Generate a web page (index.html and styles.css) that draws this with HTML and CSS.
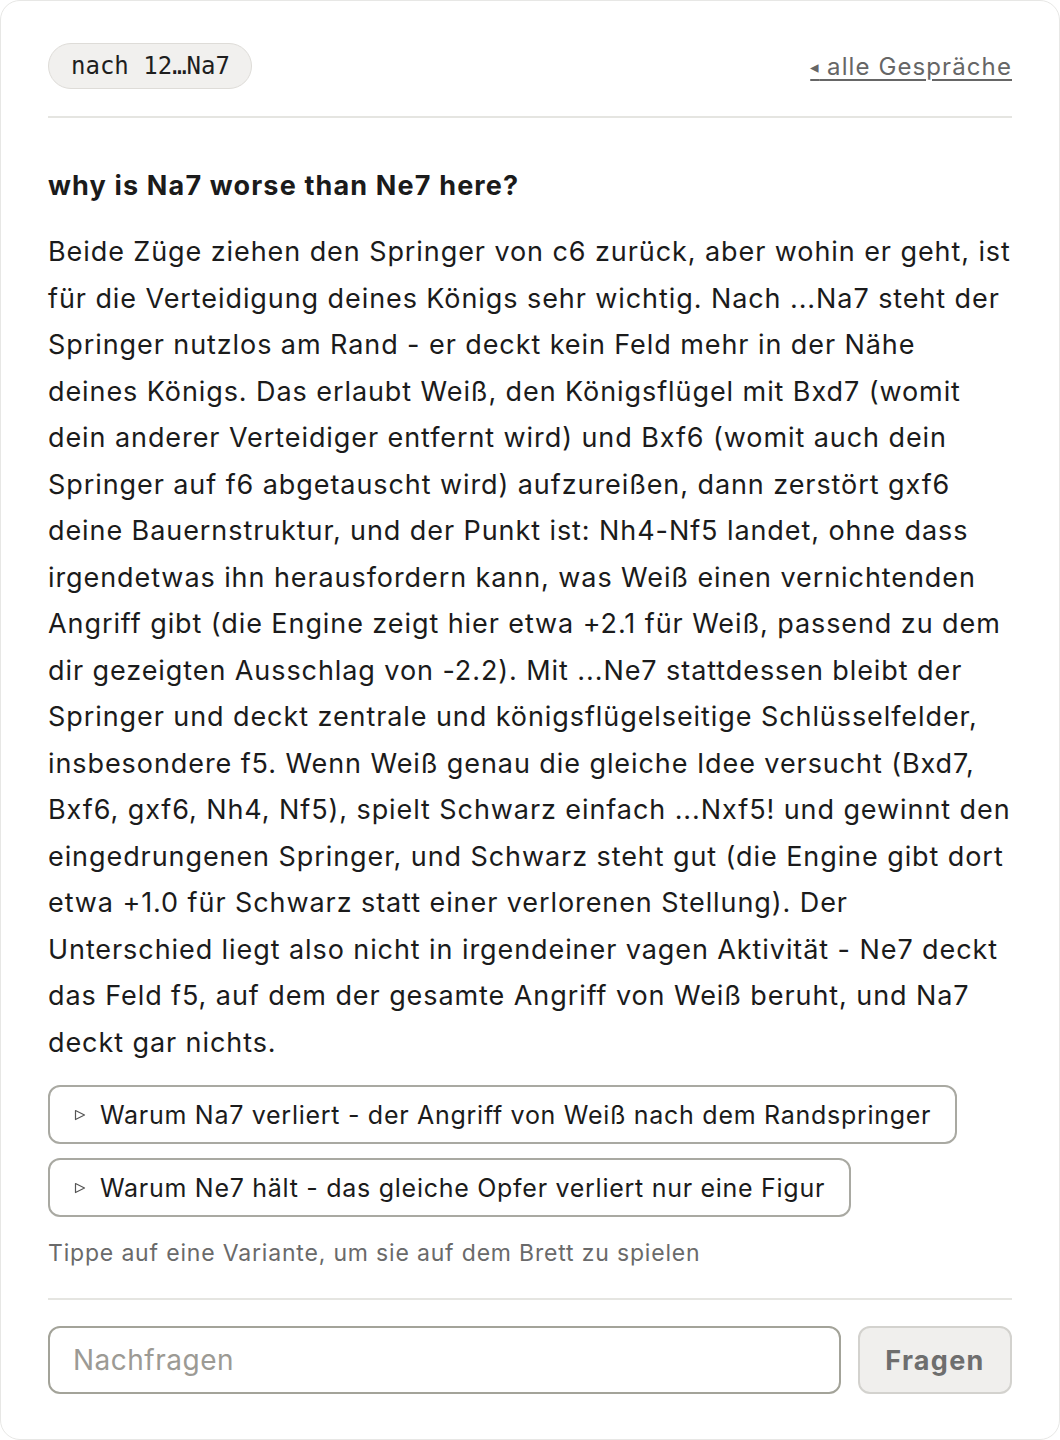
FILE: index.html
```html
<!DOCTYPE html>
<html lang="de">
<head>
<meta charset="utf-8">
<title>Gespräch</title>
<link rel="stylesheet" href="styles.css">
</head>
<body>
<main class="card">
  <header class="top">
    <span class="pill">nach 12…Na7</span>
    <a class="back" href="#"><span class="back-arrow">◂</span> alle Gespräche</a>
  </header>

  <h2 class="question">why is Na7 worse than Ne7 here?</h2>
  <p class="answer">Beide Züge ziehen den Springer von c6 zurück, aber wohin er geht, ist für die Verteidigung deines Königs sehr wichtig. Nach ...Na7 steht der Springer nutzlos am Rand - er deckt kein Feld mehr in der Nähe deines Königs. Das erlaubt Weiß, den Königsflügel mit Bxd7 (womit dein anderer Verteidiger entfernt wird) und Bxf6 (womit auch dein Springer auf f6 abgetauscht wird) aufzureißen, dann zerstört gxf6 deine Bauernstruktur, und der Punkt ist: Nh4-Nf5 landet, ohne dass irgendetwas ihn herausfordern kann, was Weiß einen vernichtenden Angriff gibt (die Engine zeigt hier etwa +2.1 für Weiß, passend zu dem dir gezeigten Ausschlag von -2.2). Mit ...Ne7 stattdessen bleibt der Springer und deckt zentrale und königsflügelseitige Schlüsselfelder, insbesondere f5. Wenn Weiß genau die gleiche Idee versucht (Bxd7, Bxf6, gxf6, Nh4, Nf5), spielt Schwarz einfach ...Nxf5! und gewinnt den eingedrungenen Springer, und Schwarz steht gut (die Engine gibt dort etwa +1.0 für Schwarz statt einer verlorenen Stellung). Der Unterschied liegt also nicht in irgendeiner vagen Aktivität - Ne7 deckt das Feld f5, auf dem der gesamte Angriff von Weiß beruht, und Na7 deckt gar nichts.</p>

  <div class="variations">
    <button class="variation" type="button">
      <svg class="tri" viewBox="0 0 12 12" width="12" height="12"><polygon points="1.5,1.5 10.5,6 1.5,10.5" fill="none" stroke="#555" stroke-width="1.2" stroke-linejoin="round"/></svg>
      <span>Warum Na7 verliert - der Angriff von Weiß nach dem Randspringer</span>
    </button>
    <button class="variation" type="button">
      <svg class="tri" viewBox="0 0 12 12" width="12" height="12"><polygon points="1.5,1.5 10.5,6 1.5,10.5" fill="none" stroke="#555" stroke-width="1.2" stroke-linejoin="round"/></svg>
      <span>Warum Ne7 hält - das gleiche Opfer verliert nur eine Figur</span>
    </button>
  </div>
  <p class="hint">Tippe auf eine Variante, um sie auf dem Brett zu spielen</p>

  <form class="ask">
    <input class="ask-input" type="text" placeholder="Nachfragen">
    <button class="ask-btn" type="button">Fragen</button>
  </form>
</main>
</body>
</html>
```

FILE: styles.css
```css
html, body {
  margin: 0;
  padding: 0;
  background: #ffffff;
}

body {
  font-family: Inter, "Helvetica Neue", "Liberation Sans", Arial, sans-serif;
  color: #1b1b1b;
}

.card {
  box-sizing: border-box;
  width: 1060px;
  min-height: 1440px;
  border: 1px solid #e7e7e5;
  border-radius: 20px;
  padding: 42px 47px 44px;
  background: #fff;
}

.top {
  display: flex;
  justify-content: space-between;
  align-items: center;
  padding-bottom: 27px;
  border-bottom: 2px solid #e5e5e1;
}

.pill {
  font-family: "DejaVu Sans Mono", "Liberation Mono", monospace;
  font-size: 24px;
  line-height: 28px;
  padding: 8px 21px 8px 22px;
  background: #f1f0ee;
  border: 1px solid #dedcd8;
  border-radius: 999px;
  color: #1e1e1e;
}

.back {
  font-size: 24px;
  letter-spacing: 1.1px;
  color: #666666;
  text-decoration: underline;
  text-underline-offset: 4px;
  text-decoration-thickness: 2px;
}

.back-arrow {
  font-size: 17px;
  letter-spacing: 0;
  position: relative;
  top: -2px;
}

.question {
  margin: 51px 0 0;
  font-size: 27px;
  line-height: 34px;
  font-weight: 700;
  letter-spacing: 1.15px;
}

.answer {
  margin: 26px 0 0;
  font-size: 27px;
  line-height: 46.5px;
  letter-spacing: 0.92px;
}

.variations {
  margin-top: 19px;
  display: flex;
  flex-direction: column;
  align-items: flex-start;
  gap: 14px;
}

.variation {
  display: flex;
  align-items: center;
  gap: 14px;
  height: 59px;
  padding: 0 24px 0 24px;
  background: #fff;
  border: 2px solid #a9a9a2;
  border-radius: 12px;
  font-family: inherit;
  font-size: 25px;
  letter-spacing: 0.72px;
  color: #1b1b1b;
}

.tri {
  flex: none;
}

.hint {
  margin: 21px 0 0;
  font-size: 23px;
  line-height: 30px;
  letter-spacing: 0.82px;
  color: #6a6a6a;
  padding-bottom: 30px;
  border-bottom: 2px solid #e5e5e1;
}

.ask {
  margin-top: 26px;
  display: flex;
  gap: 17px;
}

.ask-input {
  flex: 1;
  box-sizing: border-box;
  height: 68px;
  padding: 0 23px;
  border: 2px solid #a3a399;
  border-radius: 12px;
  font-family: inherit;
  font-size: 28px;
  letter-spacing: 0.5px;
  color: #1b1b1b;
  outline: none;
}

.ask-input::placeholder {
  color: #9c9a94;
}

.ask-btn {
  box-sizing: border-box;
  width: 154px;
  height: 68px;
  background: #f0efed;
  border: 2px solid #d3d2ce;
  border-radius: 12px;
  font-family: inherit;
  font-size: 27px;
  font-weight: 700;
  letter-spacing: 1.3px;
  color: #6e6e6e;
}
```
